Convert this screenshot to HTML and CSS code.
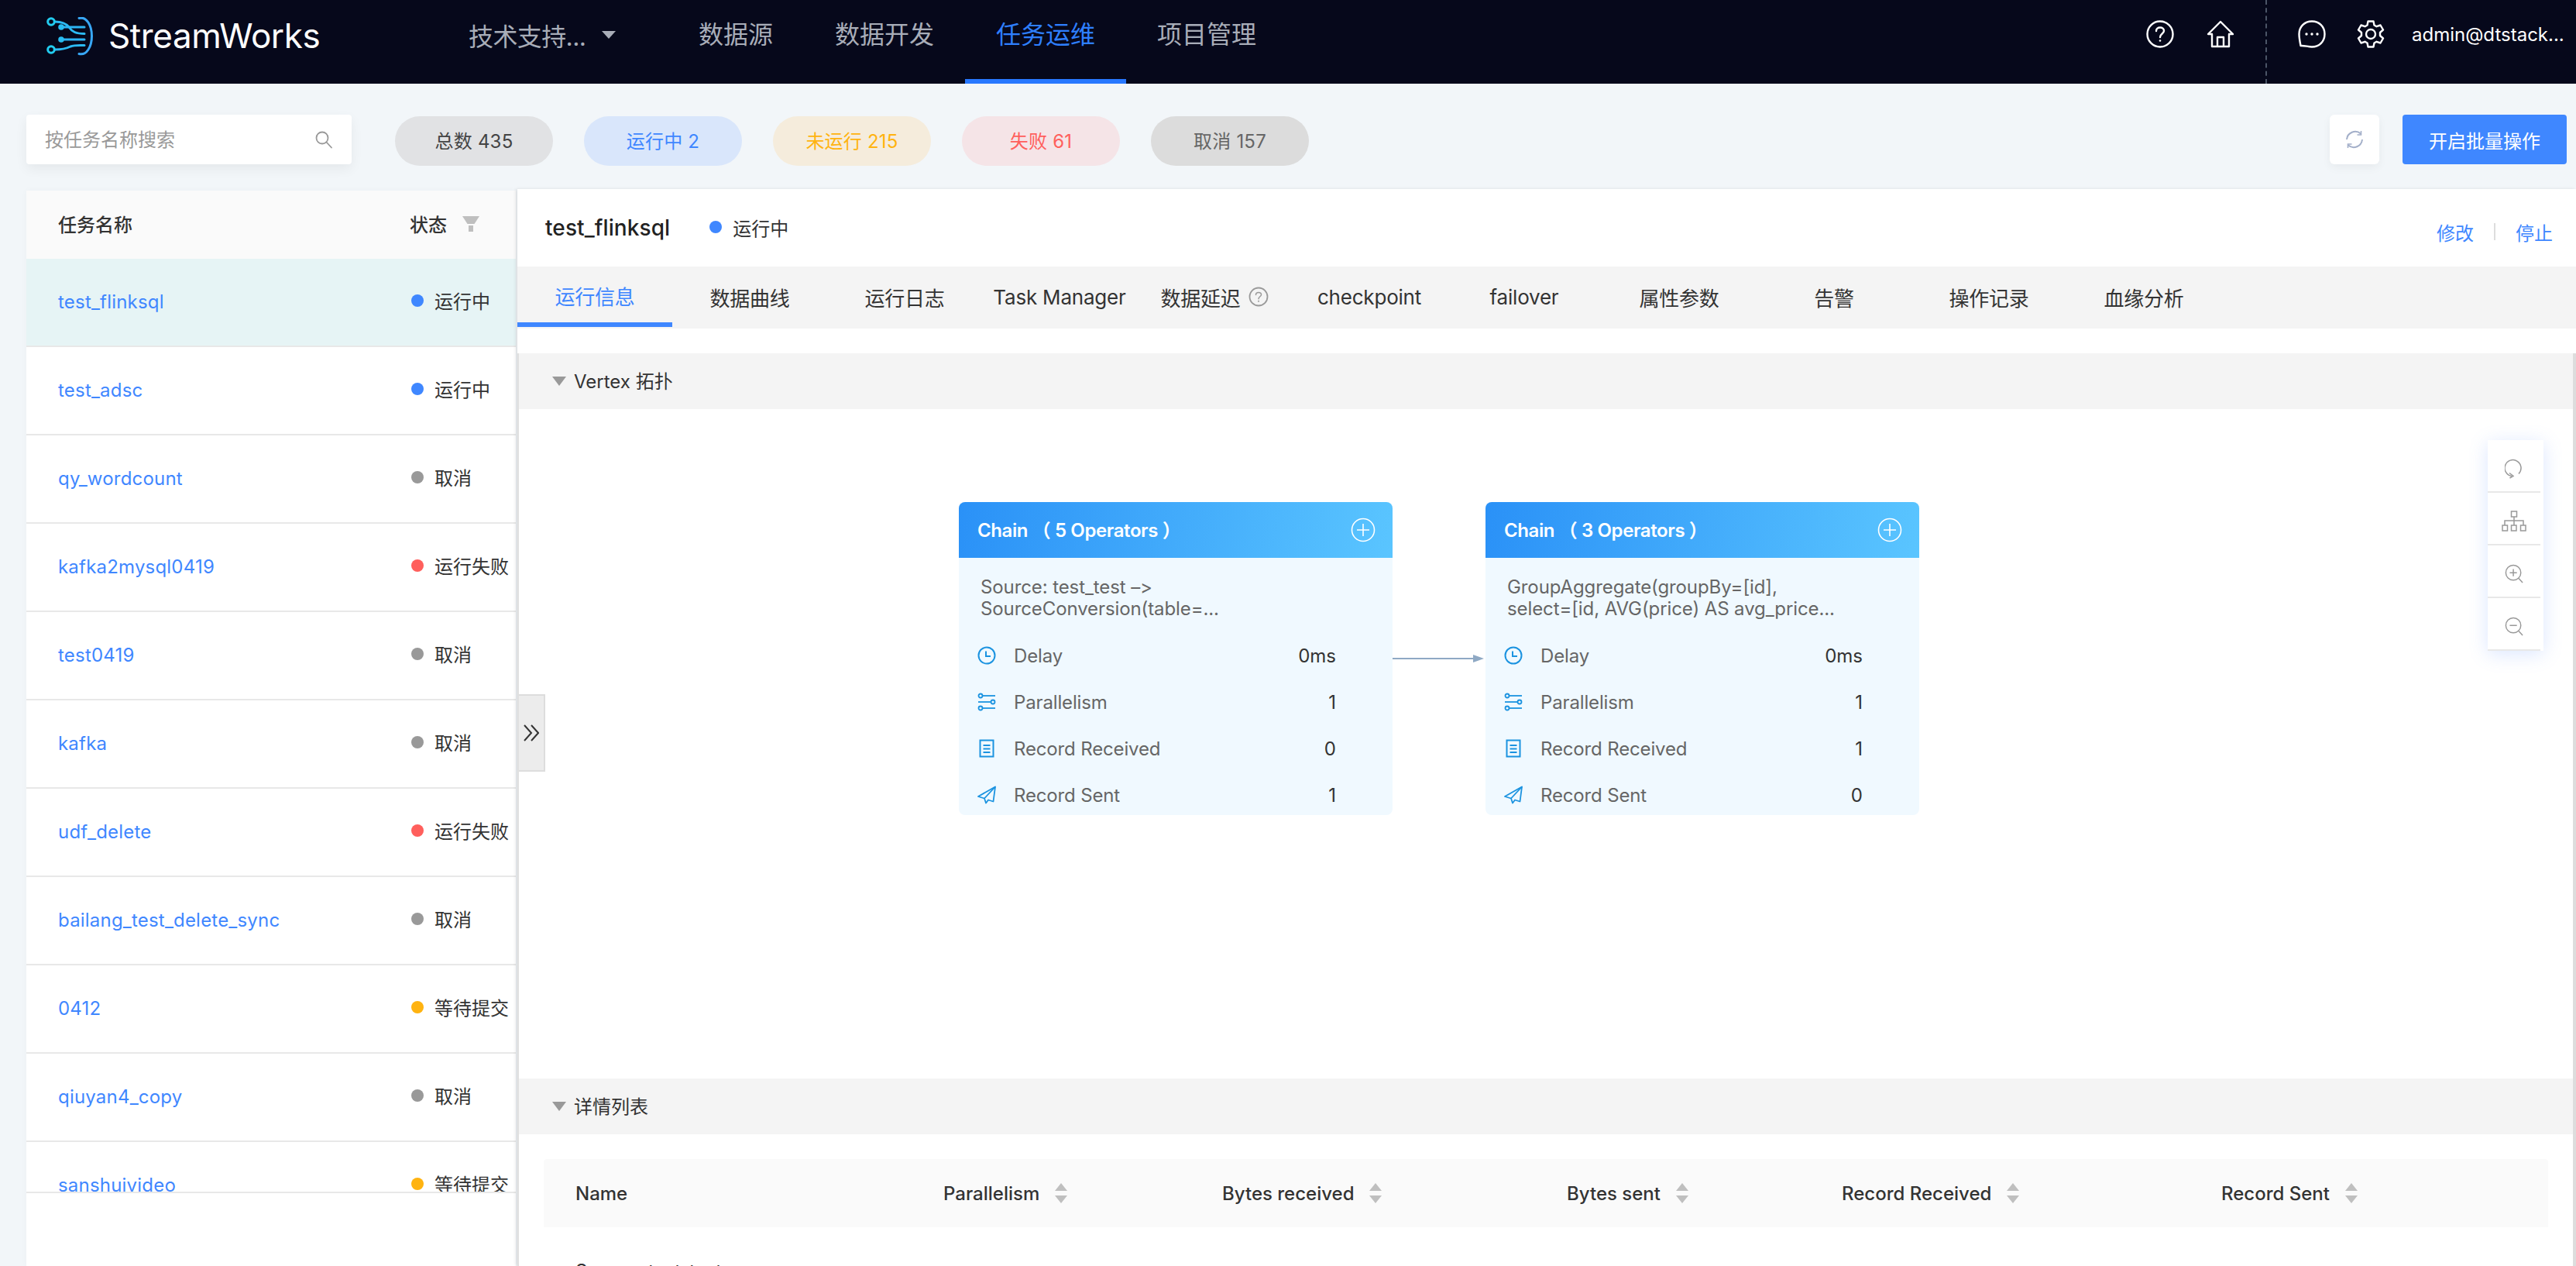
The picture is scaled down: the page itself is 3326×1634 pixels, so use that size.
FILE: index.html
```html
<!DOCTYPE html>
<html lang="zh-CN">
<head>
<meta charset="utf-8">
<title>StreamWorks</title>
<link rel="stylesheet" href="styles.css">
</head>
<body>
<div class="page">
  <header class="topbar">
    <div class="brand">
      <svg class="brand-logo" viewBox="60 21 60 50" width="60" height="50" fill="none">
        <path d="M102 22.500C112 20 118.500 32 118.500 45.500C118.500 59 112 71 102 68.500" stroke="#38a7f5" stroke-width="3" stroke-linecap="round"/>
        <path d="M71 27C80 27 85 29 89 34C93 40 98 42.500 109 42.500" stroke="#2cbaf3" stroke-width="3" stroke-linecap="round"/>
        <path d="M79 34H109M79 50H109" stroke="#2cb4f4" stroke-width="3" stroke-linecap="round"/>
        <path d="M71 63C80 63 85 62 91 59C96 57 101 57.500 109 57.500" stroke="#2cbaf3" stroke-width="3" stroke-linecap="round"/>
        <circle cx="66" cy="27" r="4.300" stroke="#22cdf0" stroke-width="3"/>
        <circle cx="66" cy="63" r="4.300" stroke="#22cdf0" stroke-width="3"/>
        <circle cx="79" cy="34" r="3.800" fill="#28bdf2"/>
        <circle cx="79" cy="50" r="3.800" fill="#28bdf2"/>
      </svg>
      <span class="brand-name">StreamWorks</span>
    </div>
    <div class="project-select">
      <span class="project-name">技术支持...</span>
      <svg width="20" height="12" viewBox="0 0 20 12"><path d="M1 1H19L10 11Z" fill="#a8adb8"/></svg>
    </div>
    <nav class="nav">
      <a class="nav-item">数据源</a>
      <a class="nav-item">数据开发</a>
      <a class="nav-item is-active">任务运维</a>
      <a class="nav-item">项目管理</a>
    </nav>
    <div class="top-actions">
      <svg class="top-icon top-icon-first" viewBox="0 0 36 36" fill="none" stroke="#fff" stroke-width="2.400"><circle cx="18" cy="18" r="16.500"/><path d="M13 14C13 11 15.200 9.500 18 9.500C20.800 9.500 23 11.200 23 13.800C23 17.500 18 17.500 18 22" stroke-linecap="round"/><circle cx="18" cy="26.500" r="1.300" fill="#fff" stroke="none"/></svg>
      <svg class="top-icon" viewBox="0 0 36 36" fill="none" stroke="#fff" stroke-width="2.400" stroke-linejoin="round"><path d="M18 2L2 18H7V34H29V18H34Z"/><path d="M14 34V22H22V34"/></svg>
      <span class="top-divider"></span>
      <svg class="top-icon" viewBox="0 0 36 36" fill="none" stroke="#fff" stroke-width="2.400" stroke-linejoin="round"><path d="M18 1.500C27.500 1.500 34.500 8.500 34.500 18C34.500 27.500 27.500 34.500 18 34.500C13 34.500 8 32.500 3.500 33C2.500 28 1.500 23 1.500 18C1.500 8.500 8.500 1.500 18 1.500Z"/><circle cx="11" cy="18" r="1.700" fill="#fff" stroke="none"/><circle cx="18" cy="18" r="1.700" fill="#fff" stroke="none"/><circle cx="25" cy="18" r="1.700" fill="#fff" stroke="none"/></svg>
      <svg class="top-icon" viewBox="0 0 36 36" fill="none" stroke="#fff" stroke-width="2.400" stroke-linejoin="round"><path d="M14.500 1.500H21.500L22.500 6.500L25.500 8.200L30.500 6.500L34 12.500L30 16V20L34 23.500L30.500 29.500L25.500 27.800L22.500 29.500L21.500 34.500H14.500L13.500 29.500L10.500 27.800L5.500 29.500L2 23.500L6 20V16L2 12.500L5.500 6.500L10.500 8.200L13.500 6.500Z"/><circle cx="18" cy="18" r="6"/></svg>
      <span class="user-name">admin@dtstack...</span>
    </div>
  </header>

  <section class="filters">
    <div class="search">
      <span class="search-text">按任务名称搜索</span>
      <svg width="24" height="24" viewBox="0 0 24 24" fill="none" stroke="#999" stroke-width="1.800"><circle cx="10" cy="10" r="7.500"/><path d="M15.500 15.500L22 22.500" stroke-linecap="round"/></svg>
    </div>
    <div class="pills">
      <span class="pill pill-total">总数 435</span>
      <span class="pill pill-running">运行中 2</span>
      <span class="pill pill-waiting">未运行 215</span>
      <span class="pill pill-failed">失败 61</span>
      <span class="pill pill-cancel">取消 157</span>
    </div>
    <div class="filter-actions">
      <button class="refresh-btn" type="button">
        <svg width="24" height="24" viewBox="0 0 24 24" fill="none" stroke="#a3afc9" stroke-width="2"><path d="M20 4.500A11 11 0 0 0 2 12"/><path d="M4 19.500A11 11 0 0 0 22 12"/><path d="M20.500 1V6H15.500M3.500 23V18H8.500" stroke-width="1.600"/></svg>
      </button>
      <button class="primary-btn" type="button">开启批量操作</button>
    </div>
  </section>

  <main class="workspace">
    <aside class="task-list">
      <div class="task-head">
        <span class="col-name">任务名称</span>
        <span class="col-status">状态
          <svg class="funnel" width="22" height="20" viewBox="0 0 22 20"><path d="M0 0H22L15.500 10H6.500Z" fill="#bfbfbf"/><path d="M8 12H14V20H8Z" fill="#bfbfbf"/></svg>
        </span>
      </div>
      <div class="task-rows">
        <div class="task-row is-selected"><a class="col-name">test_flinksql</a><span class="col-status"><i class="dot dot-blue"></i>运行中</span></div>
        <div class="task-row"><a class="col-name">test_adsc</a><span class="col-status"><i class="dot dot-blue"></i>运行中</span></div>
        <div class="task-row"><a class="col-name">qy_wordcount</a><span class="col-status"><i class="dot dot-gray"></i>取消</span></div>
        <div class="task-row"><a class="col-name">kafka2mysql0419</a><span class="col-status"><i class="dot dot-red"></i>运行失败</span></div>
        <div class="task-row"><a class="col-name">test0419</a><span class="col-status"><i class="dot dot-gray"></i>取消</span></div>
        <div class="task-row"><a class="col-name">kafka</a><span class="col-status"><i class="dot dot-gray"></i>取消</span></div>
        <div class="task-row"><a class="col-name">udf_delete</a><span class="col-status"><i class="dot dot-red"></i>运行失败</span></div>
        <div class="task-row"><a class="col-name">bailang_test_delete_sync</a><span class="col-status"><i class="dot dot-gray"></i>取消</span></div>
        <div class="task-row"><a class="col-name">0412</a><span class="col-status"><i class="dot dot-orange"></i>等待提交</span></div>
        <div class="task-row"><a class="col-name">qiuyan4_copy</a><span class="col-status"><i class="dot dot-gray"></i>取消</span></div>
        <div class="task-row"><a class="col-name">sanshuivideo</a><span class="col-status"><i class="dot dot-orange"></i>等待提交</span></div>
      </div>
    </aside>

    <section class="detail">
      <div class="detail-head">
        <h1 class="detail-title">test_flinksql</h1>
        <span class="detail-status"><i class="dot dot-blue"></i>运行中</span>
        <div class="detail-links">
          <a>修改</a><span class="link-sep"></span><a>停止</a>
        </div>
      </div>
      <div class="tabs">
        <span class="tab is-active">运行信息</span>
        <span class="tab">数据曲线</span>
        <span class="tab">运行日志</span>
        <span class="tab">Task Manager</span>
        <span class="tab">数据延迟
          <svg width="26" height="26" viewBox="0 0 26 26" fill="none" stroke="#999" stroke-width="1.800"><circle cx="13" cy="13" r="11.500"/><path d="M9.500 10.500C9.500 8.500 11 7.500 13 7.500C15 7.500 16.500 8.700 16.500 10.300C16.500 12.800 13 12.800 13 15.800" stroke-width="1.500" stroke-linecap="round"/><circle cx="13" cy="18.800" r="1" fill="#999" stroke="none"/></svg>
        </span>
        <span class="tab">checkpoint</span>
        <span class="tab">failover</span>
        <span class="tab">属性参数</span>
        <span class="tab">告警</span>
        <span class="tab">操作记录</span>
        <span class="tab">血缘分析</span>
      </div>

      <div class="tab-body">
        <div class="collapse-handle">
          <svg width="20" height="22" viewBox="0 0 20 22" fill="none" stroke="#333" stroke-width="2"><path d="M1 1L10 11L1 21M10 1L19 11L10 21"/></svg>
        </div>
        <div class="section-bar"><i class="caret"></i>Vertex 拓扑</div>
        <div class="canvas">
          <article class="node node-a">
            <header class="node-head">
              <span class="node-title">Chain （ 5 Operators ）</span>
              <svg width="32" height="32" viewBox="0 0 32 32" fill="none" stroke="#fff" stroke-width="1.600"><circle cx="16" cy="16" r="14.500"/><path d="M16 8V24M8 16H24"/></svg>
            </header>
            <p class="node-desc">Source: test_test –&gt;<br>SourceConversion(table=...</p>
            <div class="metric">
              <svg class="metric-icon" viewBox="0 0 24 24" fill="none" stroke="#1b93e0" stroke-width="2"><circle cx="12" cy="12" r="10.500"/><path d="M11 6.500V13H17"/></svg>
              <span class="metric-label">Delay</span><span class="metric-value">0ms</span>
            </div>
            <div class="metric">
              <svg class="metric-icon" viewBox="0 0 24 24" fill="none" stroke="#1b93e0" stroke-width="1.800"><circle cx="4" cy="4" r="2.500"/><path d="M6.500 4H23"/><circle cx="20" cy="12" r="2.500"/><path d="M1 12H17.500"/><circle cx="4" cy="20" r="2.500"/><path d="M6.500 20H23"/></svg>
              <span class="metric-label">Parallelism</span><span class="metric-value">1</span>
            </div>
            <div class="metric">
              <svg class="metric-icon" viewBox="0 0 24 24" fill="none" stroke="#1b93e0" stroke-width="2"><path d="M3.500 1.500H20.500V22.500H3.500Z"/><path d="M7.500 8H16.500M7.500 12.500H16.500M7.500 17H16.500" stroke-width="1.800"/></svg>
              <span class="metric-label">Record Received</span><span class="metric-value">0</span>
            </div>
            <div class="metric">
              <svg class="metric-icon" viewBox="0 0 24 24" fill="none" stroke="#1b93e0" stroke-width="1.800" stroke-linejoin="round"><path d="M23 1.500L1 14L9 16.500L11 22.500L14 18.500L20.500 20.500Z"/><path d="M23 1.500L9 16.500"/></svg>
              <span class="metric-label">Record Sent</span><span class="metric-value">1</span>
            </div>
          </article>

          <svg class="edge" width="120" height="20" viewBox="0 0 120 20"><path d="M0 10H106" stroke="#8fa9c4" stroke-width="2"/><path d="M104 5L118 10L104 15Z" fill="#8fa9c4"/></svg>

          <article class="node node-b">
            <header class="node-head">
              <span class="node-title">Chain （ 3 Operators ）</span>
              <svg width="32" height="32" viewBox="0 0 32 32" fill="none" stroke="#fff" stroke-width="1.600"><circle cx="16" cy="16" r="14.500"/><path d="M16 8V24M8 16H24"/></svg>
            </header>
            <p class="node-desc">GroupAggregate(groupBy=[id],<br>select=[id, AVG(price) AS avg_price...</p>
            <div class="metric">
              <svg class="metric-icon" viewBox="0 0 24 24" fill="none" stroke="#1b93e0" stroke-width="2"><circle cx="12" cy="12" r="10.500"/><path d="M11 6.500V13H17"/></svg>
              <span class="metric-label">Delay</span><span class="metric-value">0ms</span>
            </div>
            <div class="metric">
              <svg class="metric-icon" viewBox="0 0 24 24" fill="none" stroke="#1b93e0" stroke-width="1.800"><circle cx="4" cy="4" r="2.500"/><path d="M6.500 4H23"/><circle cx="20" cy="12" r="2.500"/><path d="M1 12H17.500"/><circle cx="4" cy="20" r="2.500"/><path d="M6.500 20H23"/></svg>
              <span class="metric-label">Parallelism</span><span class="metric-value">1</span>
            </div>
            <div class="metric">
              <svg class="metric-icon" viewBox="0 0 24 24" fill="none" stroke="#1b93e0" stroke-width="2"><path d="M3.500 1.500H20.500V22.500H3.500Z"/><path d="M7.500 8H16.500M7.500 12.500H16.500M7.500 17H16.500" stroke-width="1.800"/></svg>
              <span class="metric-label">Record Received</span><span class="metric-value">1</span>
            </div>
            <div class="metric">
              <svg class="metric-icon" viewBox="0 0 24 24" fill="none" stroke="#1b93e0" stroke-width="1.800" stroke-linejoin="round"><path d="M23 1.500L1 14L9 16.500L11 22.500L14 18.500L20.500 20.500Z"/><path d="M23 1.500L9 16.500"/></svg>
              <span class="metric-label">Record Sent</span><span class="metric-value">0</span>
            </div>
          </article>

          <div class="graph-tools">
            <div class="graph-tool">
              <svg width="24" height="28" viewBox="0 0 24 28" fill="none" stroke="#999" stroke-width="1.500"><path d="M18 20.500A10.500 10.500 0 1 0 9 23.500"/><path d="M6 19.500L11 23.500L6.500 26"/></svg>
            </div>
            <div class="graph-tool">
              <svg width="32" height="28" viewBox="0 0 32 28" fill="none" stroke="#999" stroke-width="1.500"><rect x="12.500" y="1" width="7" height="7"/><path d="M16 8V13M4 19V13H28V19M16 13V19"/><rect x="1" y="19" width="6.500" height="7"/><rect x="12.500" y="19" width="6.500" height="7"/><rect x="24.500" y="19" width="6.500" height="7"/></svg>
            </div>
            <div class="graph-tool">
              <svg width="24" height="26" viewBox="0 0 26 28" fill="none" stroke="#999" stroke-width="1.600"><circle cx="12" cy="12" r="10.500"/><path d="M12 7V17M7 12H17M19.500 20L25 26"/></svg>
            </div>
            <div class="graph-tool">
              <svg width="24" height="26" viewBox="0 0 26 28" fill="none" stroke="#999" stroke-width="1.600"><circle cx="12" cy="12" r="10.500"/><path d="M7 12H17M19.500 20L25 26"/></svg>
            </div>
          </div>
        </div>

        <div class="section-bar"><i class="caret"></i>详情列表</div>
        <div class="table">
          <div class="table-row table-head">
            <span>Name</span>
            <span>Parallelism<svg class="sorter" viewBox="0 0 16 26"><path d="M8 0L16 10H0ZM8 26L0 16H16Z" fill="#bfbfbf"/></svg></span>
            <span>Bytes received<svg class="sorter" viewBox="0 0 16 26"><path d="M8 0L16 10H0ZM8 26L0 16H16Z" fill="#bfbfbf"/></svg></span>
            <span>Bytes sent<svg class="sorter" viewBox="0 0 16 26"><path d="M8 0L16 10H0ZM8 26L0 16H16Z" fill="#bfbfbf"/></svg></span>
            <span>Record Received<svg class="sorter" viewBox="0 0 16 26"><path d="M8 0L16 10H0ZM8 26L0 16H16Z" fill="#bfbfbf"/></svg></span>
            <span>Record Sent<svg class="sorter" viewBox="0 0 16 26"><path d="M8 0L16 10H0ZM8 26L0 16H16Z" fill="#bfbfbf"/></svg></span>
          </div>
          <div class="table-row table-data">
            <span>Source: test_test</span>
          </div>
        </div>
      </div>
    </section>
  </main>
</div>
</body>
</html>
```

FILE: styles.css
```css
* { box-sizing: border-box; }
html, body { margin: 0; height: 100%; }
body {
  font-family: Inter, "Noto Sans CJK SC", sans-serif;
  font-size: 24px;
  font-variant-ligatures: none;
  font-feature-settings: "calt" 0;
  color: #333;
  background: #f2f6f9;
  overflow: hidden;
}
.page { height: 100vh; display: flex; flex-direction: column; overflow: hidden; }

/* top bar */
.topbar {
  flex: 0 0 108px;
  display: flex;
  align-items: stretch;
  background: #06081b;
  color: #a8adb8;
}
.brand { display: flex; align-items: center; width: 605px; padding: 0 0 14px 60px; }
.brand-logo { flex: none; }
.brand-name { margin: 0 0 2px 20px; font-size: 44px; line-height: 1; color: #fff; letter-spacing: -.4px; }
.project-select { display: flex; align-items: center; width: 257px; padding-bottom: 18px; font-size: 32px; gap: 20px; }
.project-name { letter-spacing: -.6px; }
.nav { display: flex; }
.nav-item {
  display: flex;
  align-items: center;
  padding: 0 40px 18px;
  font-size: 32px;
  border-bottom: 6px solid transparent;
}
.nav-item.is-active { color: #2e7fff; border-bottom-color: #2878ff; }
.top-actions { margin-left: auto; display: flex; align-items: center; padding: 0 18px 20px 0; }
.top-icon { width: 36px; height: 36px; margin-right: 40px; flex: none; }
.top-icon-first { margin-right: 42px; }
.top-divider { align-self: stretch; margin: 0 40px -20px 0; border-left: 2px dashed #4b5567; }
.user-name { width: 194px; color: #fff; font-size: 24px; white-space: nowrap; margin-left: -5px; }

/* filter strip */
.filters { flex: 0 0 136px; display: flex; align-items: flex-start; padding: 40px 12px 0 34px; }
.search {
  width: 420px;
  height: 64px;
  display: flex;
  align-items: center;
  justify-content: space-between;
  padding: 0 24px;
  background: #fff;
  border-radius: 4px;
  box-shadow: 0 6px 16px rgba(0, 0, 0, .06);
}
.search-text { color: #999; padding-bottom: 3px; }
.pills { display: flex; gap: 40px; margin: 2px 0 0 56px; }
.pill { width: 204px; height: 64px; padding-bottom: 4px; border-radius: 32px; display: flex; align-items: center; justify-content: center; letter-spacing: .2px; }
.pill-total { background: #e1e2e4; color: #444; }
.pill-running { background: #d9e6fb; color: #3f87ff; }
.pill-waiting { background: #f5ecdc; color: #ffb310; }
.pill-failed { background: #f5e4e7; color: #ff5f5c; }
.pill-cancel { background: #dcdcdc; color: #666; }
.filter-actions { margin-left: auto; display: flex; gap: 30px; }
.refresh-btn {
  width: 64px;
  height: 64px;
  padding: 0;
  display: flex;
  align-items: center;
  justify-content: center;
  border: 0;
  background: #fff;
  border-radius: 6px;
  box-shadow: 0 4px 12px rgba(0, 0, 0, .05);
}
.primary-btn {
  width: 212px;
  height: 64px;
  border: 0;
  border-radius: 4px;
  background: #3f87ff;
  color: #fff;
  font: inherit;
}

/* workspace */
.workspace { flex: 1; min-height: 0; display: flex; }

.task-list {
  flex: 0 0 632px;
  margin: 2px 0 0 34px;
  background: #fff;
  box-shadow: 0 0 8px rgba(0, 0, 0, .03);
  display: flex;
  flex-direction: column;
}
.task-head, .task-row { display: flex; align-items: center; padding-left: 41px; }
.task-head { flex: 0 0 88px; padding-bottom: 4px; background: #fafafa; font-weight: 500; }
.task-rows { flex: 0 0 1206px; overflow: hidden; border-bottom: 2px solid #e8e8e8; }
.task-row { height: 114px; border-bottom: 2px solid #e8e8e8; padding-bottom: 2px; }
.task-row.is-selected { background: #e6f4f5; }
.col-name { width: 456px; flex: none; }
.task-row .col-name { color: #3f87ff; letter-spacing: .2px; }
.col-status { display: flex; align-items: center; white-space: nowrap; }
.task-row .col-status { padding-bottom: 3px; }
.task-head .col-status { margin-left: -2px; }
.task-head .funnel { margin: 2px 0 0 20px; }
.dot { display: inline-block; width: 16px; height: 16px; border-radius: 50%; margin-right: 14px; flex: none; }
.dot-blue { background: #3f87ff; }
.dot-gray { background: #999; }
.dot-red { background: #ff5f5c; }
.dot-orange { background: #ffb310; }

/* detail */
.detail { flex: 1; min-width: 0; margin-left: 2px; background: #fff; box-shadow: -2px 0 4px rgba(0, 0, 0, .1); display: flex; flex-direction: column; }
.detail-head { flex: 0 0 100px; display: flex; align-items: center; padding: 0 30px 0 36px; }
.detail-title { margin: 0; font-size: 28px; font-weight: 500; color: #222; letter-spacing: .1px; }
.detail-status { display: flex; align-items: center; margin-left: 51px; padding-bottom: 2px; }
.detail-links { margin-left: auto; padding-top: 10px; display: flex; align-items: center; color: #3f87ff; }
.link-sep { width: 2px; height: 22px; background: #ddd; margin: 0 26px; }

.tabs { flex: 0 0 80px; display: flex; background: #f4f4f4; }
.tab {
  width: 200px;
  padding-top: 4px;
  display: flex;
  align-items: center;
  justify-content: center;
  gap: 10px;
  font-size: 26px;
  color: #333;
  letter-spacing: -.2px;
  border-bottom: 6px solid transparent;
  white-space: nowrap;
}
.tab.is-active { color: #3f87ff; border-bottom-color: #3f87ff; margin-bottom: 2px; padding-top: 2px; }

.tab-body { position: relative; flex: 1; min-height: 0; margin-top: 32px; border-left: 2px solid #e0e0e0; border-right: 4px solid #ddd; overflow: hidden; }
.collapse-handle {
  position: absolute;
  left: 0;
  top: 440px;
  z-index: 2;
  width: 34px;
  height: 100px;
  display: flex;
  align-items: center;
  justify-content: center;
  background: #ececec;
  border: 2px solid #ddd;
  border-left: 0;
}
.section-bar { height: 72px; display: flex; align-items: center; padding: 0 0 3px 43px; background: #f4f4f4; color: #333; }
.caret { width: 0; height: 0; margin: 3px 10px 0 0; border: 9px solid transparent; border-top: 12px solid #999; border-bottom: 0; }

.canvas { position: relative; height: 864px; }
.node { position: absolute; top: 120px; width: 560px; height: 404px; background: #f0f9ff; border-radius: 8px; overflow: hidden; }
.node-a { left: 568px; }
.node-b { left: 1248px; }
.node-head {
  height: 72px;
  display: flex;
  align-items: center;
  justify-content: space-between;
  padding: 0 22px 0 24px;
  background: linear-gradient(100deg, #2a91f7, #5ac5ff);
  color: #fff;
  font-weight: 600;
}
.node-title { margin-bottom: 3px; letter-spacing: -.4px; }
.node-desc { margin: 24px 0 0 28px; height: 56px; font-size: 24px; line-height: 28px; color: #666; letter-spacing: -.1px; white-space: nowrap; }
.metric { height: 60px; display: flex; align-items: center; padding-left: 24px; }
.node-desc + .metric { margin-top: 16px; }
.metric-icon { width: 24px; height: 24px; flex: none; }
.metric-label { margin-left: 23px; color: #666; letter-spacing: -.15px; }
.metric-value { position: absolute; left: 0; width: 487px; text-align: right; color: #333; }
.edge { position: absolute; left: 1128px; top: 312px; }

.graph-tools { position: absolute; right: 38px; top: 40px; width: 72px; background: #fff; box-shadow: 0 4px 24px rgba(90, 140, 255, .22); }
.graph-tool { width: 68px; height: 68px; padding-top: 8px; display: flex; align-items: center; justify-content: center; border-bottom: 2px solid #e8e8e8; }

/* table */
.table { margin: 32px 32px 0 32px; }
.table-row { display: grid; grid-template-columns: 475px 360px 445px 355px 490px 1fr; padding-left: 41px; align-items: center; }
.table-row span { display: flex; align-items: center; }
.table-head { height: 88px; background: #fafafa; font-weight: 500; border-radius: 4px 4px 0 0; }
.table-data { height: 112px; }
.sorter { width: 16px; height: 26px; margin-left: 20px; }
```
